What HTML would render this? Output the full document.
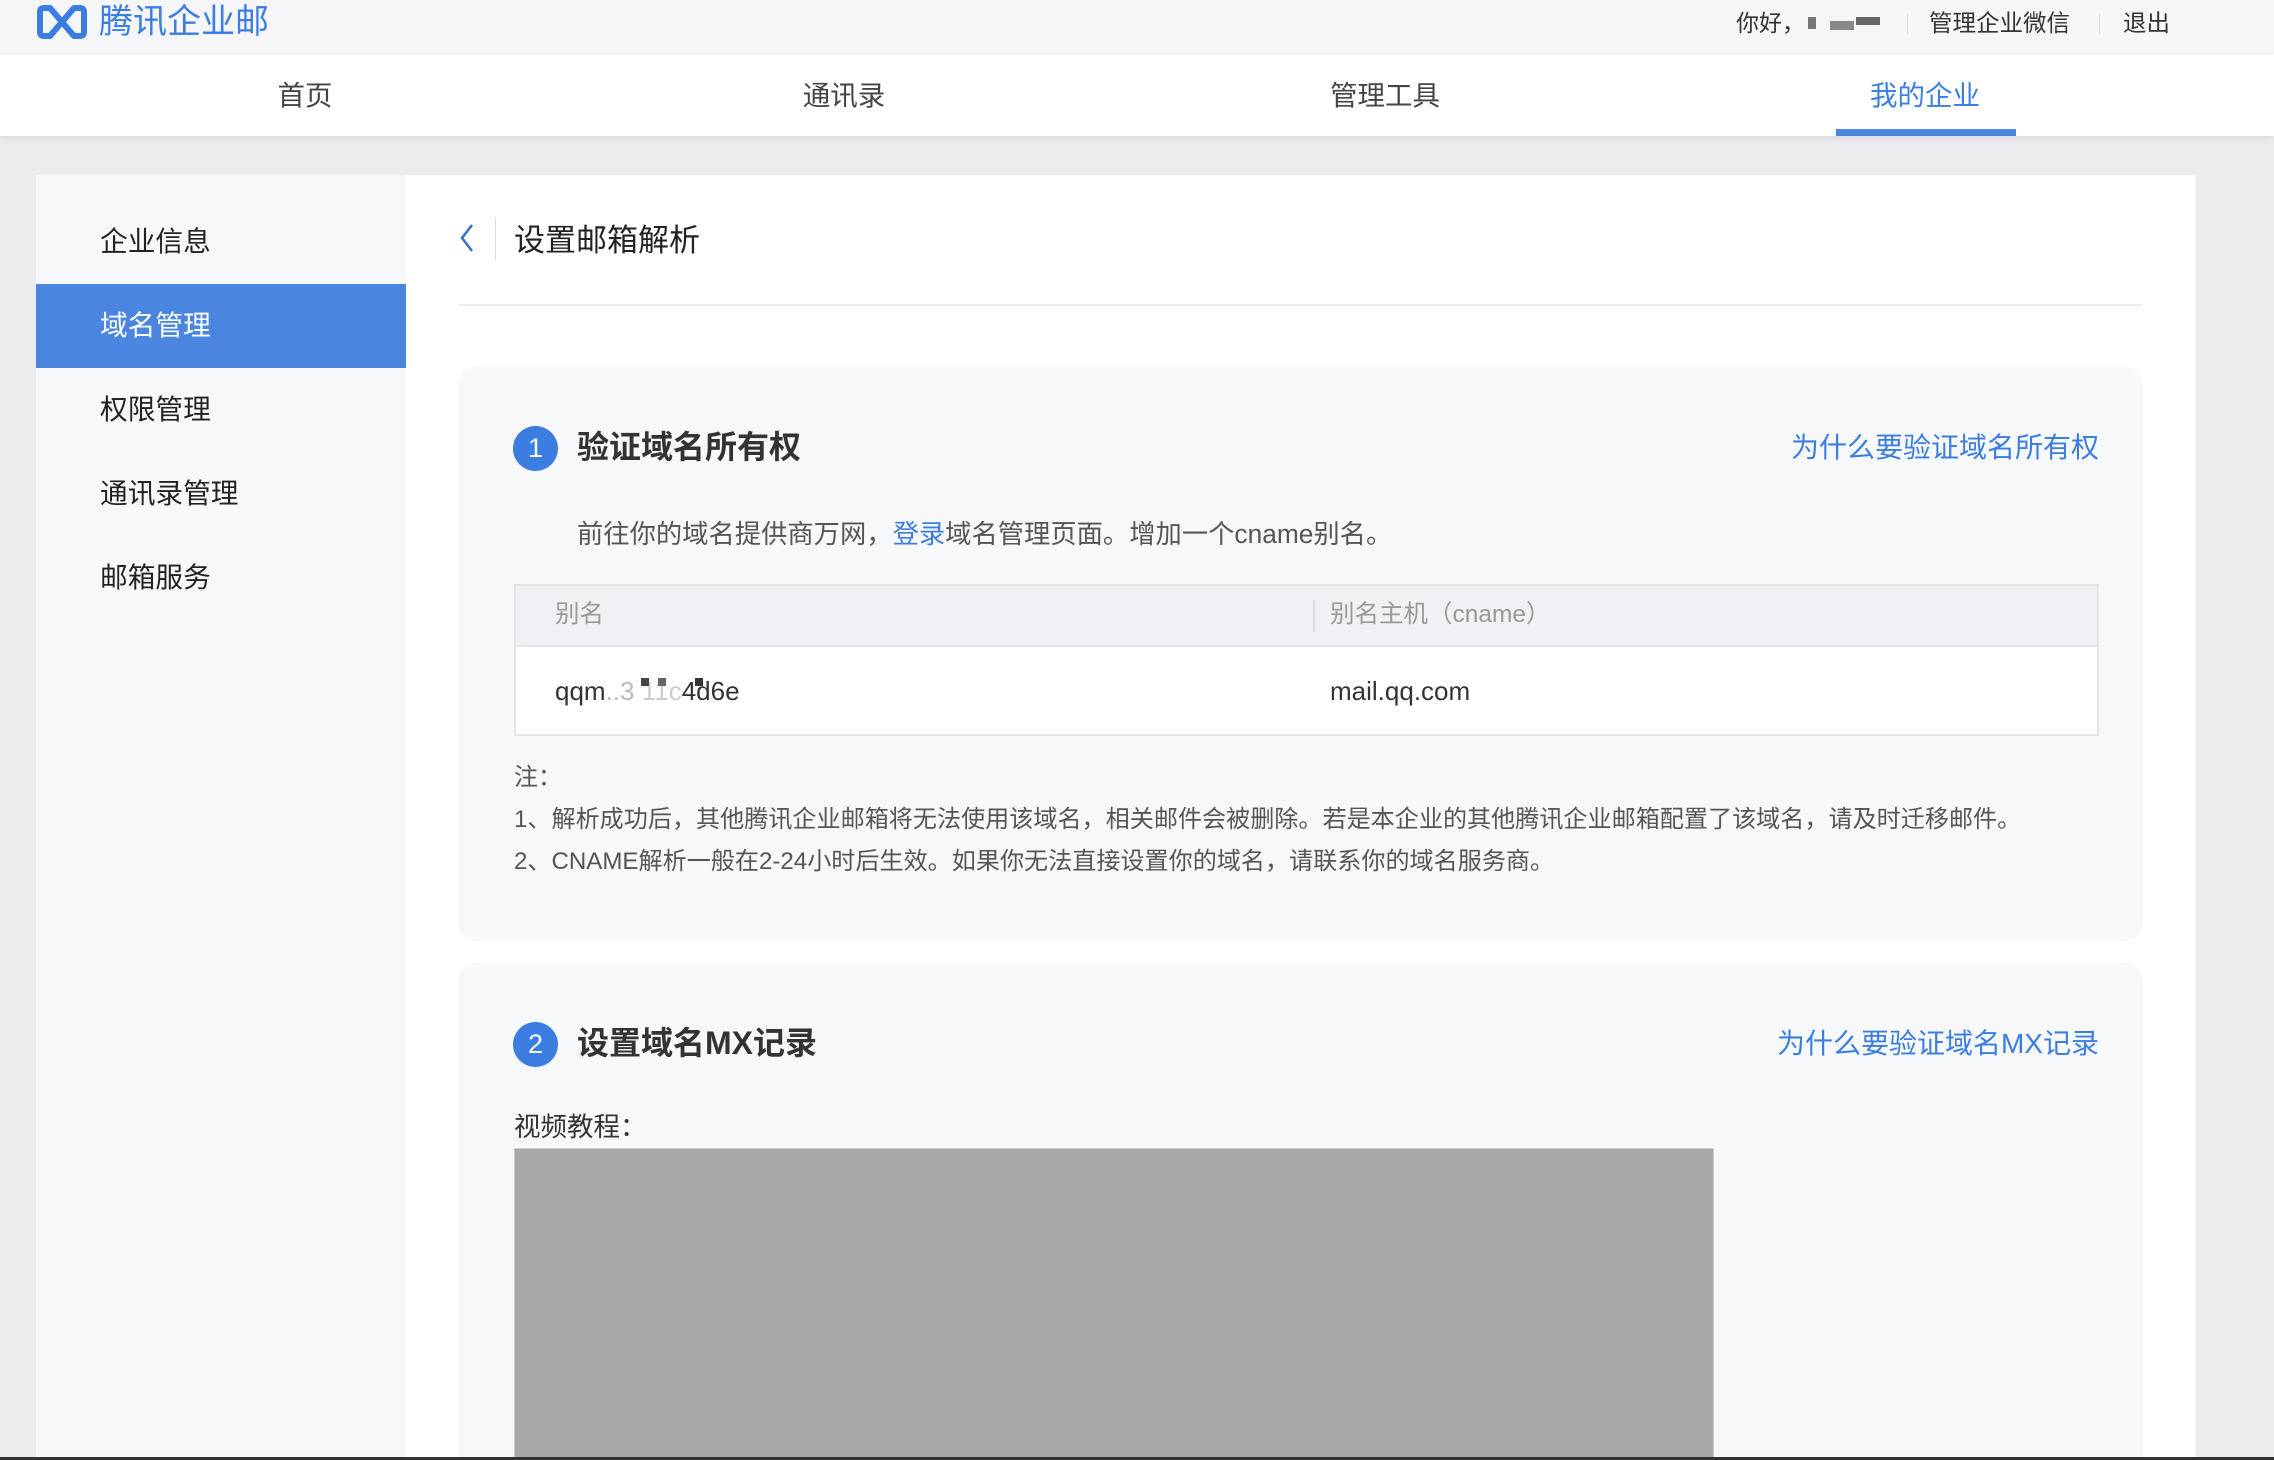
<!DOCTYPE html>
<html><head><meta charset="utf-8"><style>
*{margin:0;padding:0;box-sizing:border-box}
html,body{width:2274px;height:1460px;overflow:hidden}
body{background:#ebebed;font-family:"Liberation Sans","Noto Sans CJK SC",sans-serif;color:#333}
#w{position:relative;width:2274px;height:1460px;overflow:hidden}
.a{position:absolute;white-space:nowrap}
</style></head><body><div id="w">
<div class="a" style="left:0;top:0;width:2274px;height:55px;background:#f6f6f8"></div>
<svg class="a" style="left:36px;top:4px" width="52" height="36" viewBox="0 0 52 36"><path d="M14 4H8Q4 4 4 8V28Q4 32 8 32H14L26 18L38 4H44Q48 4 48 8V28Q48 32 44 32H38L26 18L14 4Z" fill="none" stroke="#3b7de0" stroke-width="6" stroke-linejoin="round"/></svg>
<div class="a" style="left:99px;top:0;font-size:34px;line-height:44px;color:#3b7de0">腾讯企业邮</div>
<div class="a" style="left:1736px;top:8px;font-size:23px;line-height:30px;color:#333">你好，</div>
<div class="a" style="left:1808px;top:17px;width:8px;height:12px;background:#777"></div>
<div class="a" style="left:1830px;top:21px;width:24px;height:9px;background:#888"></div>
<div class="a" style="left:1856px;top:17px;width:24px;height:8px;background:#666"></div>
<div class="a" style="left:1907px;top:14px;width:1px;height:20px;background:#ddd"></div>
<div class="a" style="left:1929px;top:8px;font-size:23.5px;line-height:30px">管理企业微信</div>
<div class="a" style="left:2099px;top:14px;width:1px;height:20px;background:#ddd"></div>
<div class="a" style="left:2123px;top:8px;font-size:23.5px;line-height:30px">退出</div>
<div class="a" style="left:0;top:55px;width:2274px;height:81px;background:#fff;box-shadow:0 2px 6px rgba(0,0,0,.08)"></div>
<div class="a" style="left:0;top:78px;width:610px;text-align:center;font-size:27.5px;line-height:36px;color:#444">首页</div>
<div class="a" style="left:544px;top:78px;width:600px;text-align:center;font-size:27.5px;line-height:36px;color:#444">通讯录</div>
<div class="a" style="left:1085px;top:78px;width:600px;text-align:center;font-size:27.5px;line-height:36px;color:#444">管理工具</div>
<div class="a" style="left:1625px;top:78px;width:600px;text-align:center;font-size:27.5px;line-height:36px;color:#3b7de0">我的企业</div>
<div class="a" style="left:1836px;top:129px;width:180px;height:7px;background:#4a86e0"></div>
<div class="a" style="left:36px;top:175px;width:370px;height:1285px;background:#f7f8fa"></div>
<div class="a" style="left:406px;top:175px;width:1790px;height:1285px;background:#fff"></div>
<div class="a" style="left:100px;top:224px;font-size:27.7px;line-height:36px;color:#222">企业信息</div>
<div class="a" style="left:36px;top:284px;width:370px;height:84px;background:#4a86e0"></div>
<div class="a" style="left:100px;top:308px;font-size:27.7px;line-height:36px;color:#fff">域名管理</div>
<div class="a" style="left:100px;top:392px;font-size:27.7px;line-height:36px;color:#222">权限管理</div>
<div class="a" style="left:100px;top:476px;font-size:27.7px;line-height:36px;color:#222">通讯录管理</div>
<div class="a" style="left:100px;top:560px;font-size:27.7px;line-height:36px;color:#222">邮箱服务</div>
<svg class="a" style="left:458px;top:222px" width="18" height="32" viewBox="0 0 18 32"><path d="M14 3L4 16L14 29" fill="none" stroke="#3b6fc4" stroke-width="2.5"/></svg>
<div class="a" style="left:495px;top:218px;width:1px;height:42px;background:#ddd"></div>
<div class="a" style="left:514px;top:220px;font-size:31px;line-height:42px;color:#222">设置邮箱解析</div>
<div class="a" style="left:458px;top:304px;width:1685px;height:2px;background:#eee"></div>
<div class="a" style="left:458px;top:367px;width:1685px;height:574px;background:#f7f8fa;border-radius:18px"></div>
<div class="a" style="left:513px;top:426px;width:45px;height:45px;border-radius:50%;background:#3b7de0;color:#fff;font-size:27px;line-height:45px;text-align:center">1</div>
<div class="a" style="left:577px;top:426px;font-size:32px;line-height:42px;font-weight:bold;color:#333">验证域名所有权</div>
<div class="a" style="right:175px;top:429px;font-size:28px;line-height:38px;color:#3b7de0">为什么要验证域名所有权</div>
<div class="a" style="left:577px;top:517px;font-size:26.3px;line-height:35px;color:#555">前往你的域名提供商万网，<span style="color:#3b7de0">登录</span>域名管理页面。增加一个cname别名。</div>
<div class="a" style="left:514px;top:584px;width:1585px;height:152px;background:#fff;border:2px solid #e4e5e8"></div>
<div class="a" style="left:516px;top:586px;width:1581px;height:61px;background:#f0f1f4;border-bottom:2px solid #e4e5e8"></div>
<div class="a" style="left:1313px;top:600px;width:2px;height:32px;background:#dcdde0"></div>
<div class="a" style="left:555px;top:599px;font-size:24.5px;line-height:32px;color:#999">别名</div>
<div class="a" style="left:1330px;top:599px;font-size:24.5px;line-height:32px;color:#999">别名主机（cname）</div>
<div class="a" style="left:555px;top:674px;font-size:26px;line-height:34px;color:#333">qqm<span style="color:#bbb">..3 </span><span style="color:#ccc">11c</span>4d6e</div>
<div class="a" style="left:641px;top:678px;width:8px;height:8px;background:#444"></div>
<div class="a" style="left:658px;top:678px;width:8px;height:8px;background:#666"></div>
<div class="a" style="left:695px;top:678px;width:8px;height:8px;background:#333"></div>
<div class="a" style="left:1330px;top:674px;font-size:26px;line-height:34px;color:#333">mail.qq.com</div>
<div class="a" style="left:514px;top:762px;font-size:24px;line-height:32px;color:#555">注：</div>
<div class="a" style="left:514px;top:804px;font-size:24.1px;line-height:32px;color:#555">1、解析成功后，其他腾讯企业邮箱将无法使用该域名，相关邮件会被删除。若是本企业的其他腾讯企业邮箱配置了该域名，请及时迁移邮件。</div>
<div class="a" style="left:514px;top:846px;font-size:24.1px;line-height:32px;color:#555">2、CNAME解析一般在2-24小时后生效。如果你无法直接设置你的域名，请联系你的域名服务商。</div>
<div class="a" style="left:458px;top:963px;width:1685px;height:497px;background:#f7f8fa;border-radius:18px 18px 0 0"></div>
<div class="a" style="left:513px;top:1022px;width:45px;height:45px;border-radius:50%;background:#3b7de0;color:#fff;font-size:27px;line-height:45px;text-align:center">2</div>
<div class="a" style="left:577px;top:1022px;font-size:32px;line-height:42px;font-weight:bold;color:#333">设置域名MX记录</div>
<div class="a" style="right:175px;top:1025px;font-size:28px;line-height:38px;color:#3b7de0">为什么要验证域名MX记录</div>
<div class="a" style="left:514px;top:1110px;font-size:26.5px;line-height:34px;color:#333">视频教程：</div>
<div class="a" style="left:514px;top:1148px;width:1200px;height:312px;background:#a8a8a8;border:1px solid #ccc"></div>
<div class="a" style="left:0;top:1457px;width:2274px;height:3px;background:#333"></div>
</div></body></html>
